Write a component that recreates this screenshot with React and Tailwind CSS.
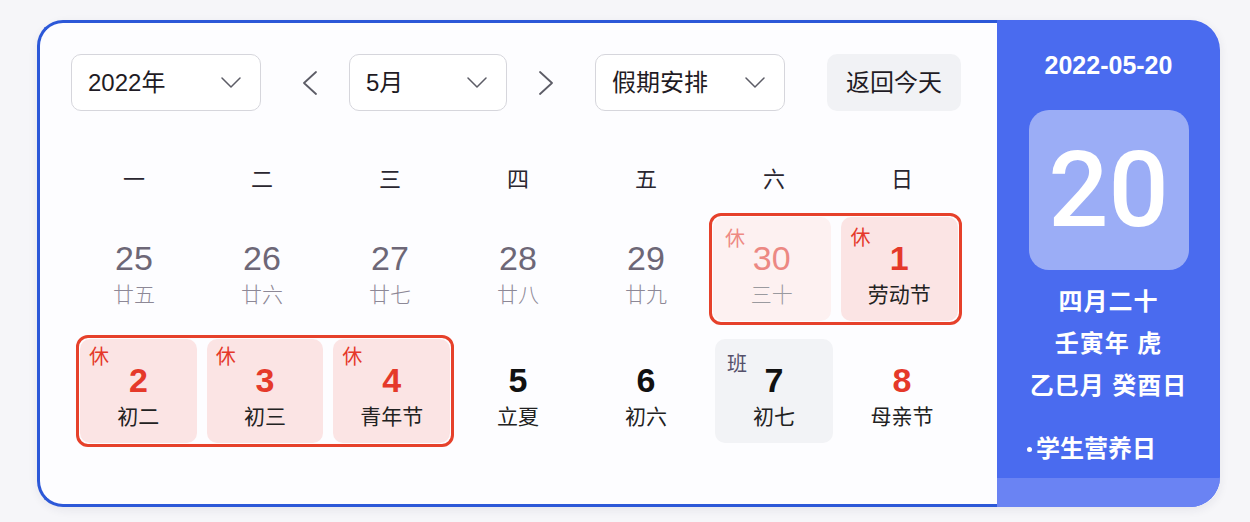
import React from "react";

const ChevronDown = () => (
  <svg width="20" height="11" viewBox="0 0 20 11" fill="none">
    <path d="M1 1L10 10L19 1" stroke="#5c5c66" strokeWidth="1.5" strokeLinecap="round" strokeLinejoin="round" />
  </svg>
);

const Arrow = ({ dir }) => (
  <svg width="16" height="24" viewBox="0 0 16 24" fill="none">
    <path
      d={dir === "left" ? "M14 1L2 12L14 23" : "M2 1L14 12L2 23"}
      stroke="#5c5c66"
      strokeWidth="1.8"
      strokeLinecap="round"
      strokeLinejoin="round"
    />
  </svg>
);

const Select = ({ label, width }) => (
  <div
    className={`${width} h-[57px] flex items-center justify-between pl-[16px] pr-[19px] border border-[#d6d6dc] rounded-[10px] bg-white text-[24px] text-[#1f1b24]`}
  >
    <span>{label}</span>
    <ChevronDown />
  </div>
);

const Cell = ({ day, lunar, tag, tagPos, variant, bg, width = "w-full" }) => {
  const numCls = {
    prev: "text-[#6d6777] font-normal",
    prevHoliday: "text-[#ec8883] font-normal",
    holiday: "text-[#e5392a] font-bold",
    red: "text-[#e5392a] font-bold",
    normal: "text-[#111] font-semibold",
  }[variant];
  const lunarCls = {
    prev: "text-[#8d8896] font-light",
    prevHoliday: "text-[#9a9a9f] font-light",
    holiday: "text-[#222]",
    red: "text-[#222]",
    normal: "text-[#222]",
  }[variant];
  const tagCls = variant === "prevHoliday" ? "text-[#ee8a84]" : tag === "班" ? "text-[#55506a]" : "text-[#e5392a]";
  return (
    <div className={`relative ${width} h-[104px] rounded-[10px] flex flex-col items-center pt-[24px] ${bg || ""}`}>
      {tag && (
        <span className={`absolute text-[20px] leading-none ${tagPos || "top-[8px] left-[9px]"} ${tagCls}`}>{tag}</span>
      )}
      <span className={`text-[34px] leading-[34px] ${numCls}`}>{day}</span>
      <span className={`mt-[9px] text-[21px] leading-[22px] ${lunarCls}`}>{lunar}</span>
    </div>
  );
};

const Plain = (props) => (
  <div className="border-y-[3px] border-transparent py-[1px] px-[5px]">
    <Cell {...props} />
  </div>
);

const Group = ({ span, extra, children }) => (
  <div className={`${span} ${extra} border-[3px] border-[#e6412b] rounded-[12px] p-[1px] flex gap-[10px]`}>
    {children}
  </div>
);

export default function App() {
  const weekdays = ["一", "二", "三", "四", "五", "六", "日"];
  return (
    <div className="w-[1250px] h-[522px] bg-[#f6f6f9] pt-[20px] pl-[37px] font-['Liberation_Sans','Noto_Sans_CJK_SC',sans-serif]">
      <div className="flex w-[1183px] h-[487px] rounded-[28px] shadow-[0_3px_10px_rgba(40,40,80,0.08)]">
        {/* Left: calendar */}
        <div className="w-[960px] h-full border-[3px] border-r-0 border-[#2c58d8] rounded-l-[26px] bg-[#fdfdff] pt-[31px] pl-[30px]">
          {/* Controls */}
          <div className="flex items-center">
            <div className="ml-[1px]">
              <Select label="2022年" width="w-[190px]" />
            </div>
            <button className="ml-[41px]">
              <Arrow dir="left" />
            </button>
            <div className="ml-[31px]">
              <Select label="5月" width="w-[158px]" />
            </div>
            <button className="ml-[31px]">
              <Arrow dir="right" />
            </button>
            <div className="ml-[41px]">
              <Select label="假期安排" width="w-[190px]" />
            </div>
            <button className="ml-[42px] w-[134px] h-[57px] rounded-[10px] bg-[#f1f2f5] text-[24px] text-[#1f1b24]">
              返回今天
            </button>
          </div>

          {/* Weekdays */}
          <div className="mt-[44px] grid grid-cols-[repeat(7,128px)] h-[48px] items-center">
            {weekdays.map((w) => (
              <div key={w} className="text-center text-[22px] text-[#2a2630]">
                {w}
              </div>
            ))}
          </div>

          {/* Row 1 */}
          <div className="mt-[10px] grid grid-cols-[repeat(7,128px)] items-start">
            <Plain day="25" lunar="廿五" variant="prev" />
            <Plain day="26" lunar="廿六" variant="prev" />
            <Plain day="27" lunar="廿七" variant="prev" />
            <Plain day="28" lunar="廿八" variant="prev" />
            <Plain day="29" lunar="廿九" variant="prev" />
            <Group span="col-span-2" extra="-ml-[1px] mr-[4px]">
              <Cell day="30" lunar="三十" tag="休" tagPos="top-[12px] left-[12px]" variant="prevHoliday" bg="bg-[#fdf1f1]" width="flex-1" />
              <Cell day="1" lunar="劳动节" tag="休" tagPos="top-[11px] left-[10px]" variant="holiday" bg="bg-[#fbe4e4]" width="flex-1" />
            </Group>
          </div>

          {/* Row 2 */}
          <div className="mt-[10px] grid grid-cols-[repeat(7,128px)] items-start">
            <Group span="col-span-3" extra="ml-[6px]">
              <Cell day="2" lunar="初二" tag="休" variant="holiday" bg="bg-[#fbe4e4]" width="flex-1" />
              <Cell day="3" lunar="初三" tag="休" variant="holiday" bg="bg-[#fbe4e4]" width="flex-1" />
              <Cell day="4" lunar="青年节" tag="休" variant="holiday" bg="bg-[#fbe4e4]" width="flex-1" />
            </Group>
            <Plain day="5" lunar="立夏" variant="normal" />
            <Plain day="6" lunar="初六" variant="normal" />
            <Plain day="7" lunar="初七" tag="班" tagPos="top-[15px] left-[12px]" variant="normal" bg="bg-[#f2f3f6]" />
            <Plain day="8" lunar="母亲节" variant="red" />
          </div>
        </div>

        {/* Right: today panel */}
        <div className="w-[223px] h-full bg-[#4a6bef] rounded-r-[30px] overflow-hidden flex flex-col items-center text-white">
          <div className="mt-[31px] text-[25px] leading-[28px] font-bold">2022-05-20</div>
          <div className="mt-[31px] w-[160px] h-[160px] rounded-[20px] bg-white/45 flex items-center justify-center">
            <span className="text-[106px] leading-none font-medium font-['Roboto',sans-serif]">20</span>
          </div>
          <div className="mt-[11px] text-[24px] leading-[42px] font-bold tracking-[1px] text-center">
            <div>四月二十</div>
            <div>壬寅年 虎</div>
            <div>乙巳月 癸酉日</div>
          </div>
          <div className="self-start pl-[30px] mt-[21px] text-[24px] leading-[42px] font-bold flex items-center">
            <span className="w-[5px] h-[5px] rounded-full bg-white mr-[4px]" />
            学生营养日
          </div>
          <div className="mt-auto w-full h-[29px] bg-[#6a83f3]" />
        </div>
      </div>
    </div>
  );
}
